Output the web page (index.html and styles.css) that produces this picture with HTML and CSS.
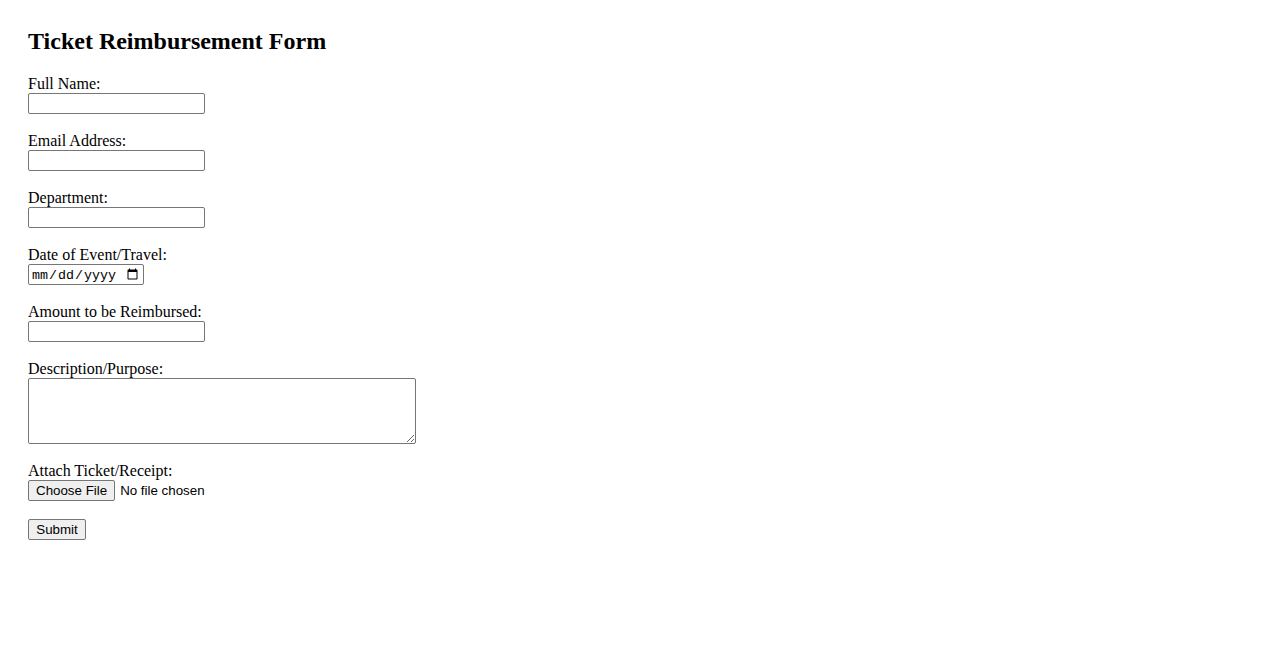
FILE: index.html
```html
<!DOCTYPE html>
<html>
<head>
<meta charset="utf-8">
<title>Ticket Reimbursement Form</title>
<link rel="stylesheet" href="styles.css">
</head>
<body>
<h2 class="title">Ticket Reimbursement Form</h2>
<form class="form">
  <div class="group">
    <label class="label" for="name">Full Name:</label>
    <input class="field" type="text" id="name">
  </div>
  <div class="group">
    <label class="label" for="email">Email Address:</label>
    <input class="field" type="email" id="email">
  </div>
  <div class="group">
    <label class="label" for="dept">Department:</label>
    <input class="field" type="text" id="dept">
  </div>
  <div class="group">
    <label class="label" for="date">Date of Event/Travel:</label>
    <input class="date" type="date" id="date">
  </div>
  <div class="group">
    <label class="label" for="amount">Amount to be Reimbursed:</label>
    <input class="field" type="text" id="amount">
  </div>
  <div class="group">
    <label class="label" for="desc">Description/Purpose:</label>
    <textarea class="area" id="desc"></textarea>
  </div>
  <div class="group">
    <label class="label" for="file">Attach Ticket/Receipt:</label>
    <input class="file" type="file" id="file">
  </div>
  <div class="group">
    <button class="submit" type="submit">Submit</button>
  </div>
</form>
</body>
</html>
```

FILE: styles.css
```css
html { background: #fff; }
body {
  margin: 28px;
  font-family: "Liberation Serif", "Times New Roman", serif;
  font-size: 16px;
  color: #000;
}
.title {
  font-size: 24px;
  font-weight: bold;
  margin: 0 0 20px 0;
  line-height: 27px;
}
.form { margin: 0; }
.group {
  margin-bottom: 18px;
}
.label {
  display: block;
  line-height: 18px;
}
.field {
  display: block;
  box-sizing: border-box;
  width: 177px;
  height: 21px;
  margin: 0;
  padding: 1px 2px;
  border: 1px solid #767676;
  border-radius: 2px;
  font-family: "Liberation Sans", Arial, sans-serif;
  font-size: 13.33px;
}
.date {
  display: block;
  box-sizing: border-box;
  width: 116px;
  height: 21px;
  margin: 0;
  padding: 2px 2px 1px 2px;
  border: 1px solid #767676;
  border-radius: 2px;
  font-family: "Liberation Mono", monospace;
  font-size: 13.33px;
}
.area {
  display: block;
  box-sizing: border-box;
  width: 388px;
  height: 66px;
  margin: 0;
  border: 1px solid #767676;
  border-radius: 2px;
  font-family: "Liberation Mono", monospace;
  font-size: 13.33px;
}
.file {
  display: block;
  margin: 0;
  height: 21px;
  font-family: "Liberation Sans", Arial, sans-serif;
  font-size: 13.33px;
}
.file::file-selector-button {
  font-family: "Liberation Sans", Arial, sans-serif;
  font-size: 13.33px;
  height: 21px;
  padding: 1px 7px;
  background: #efefef;
  border: 1px solid #767676;
  border-radius: 2px;
  margin-right: 5px;
  color: #000;
}
.submit {
  display: block;
  box-sizing: border-box;
  margin: 0;
  width: 58px;
  height: 21px;
  padding: 1px 6px;
  font-family: "Liberation Sans", Arial, sans-serif;
  font-size: 13.33px;
  background: #efefef;
  border: 1px solid #767676;
  border-radius: 2px;
  color: #000;
}
```
